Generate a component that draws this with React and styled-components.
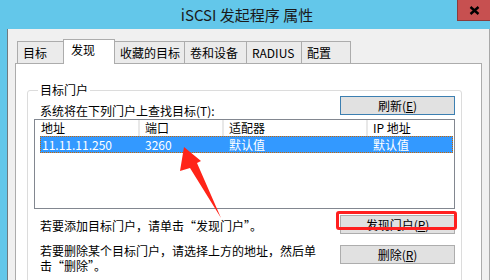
import React from "react";
import styled, { createGlobalStyle } from "styled-components";

const GlobalStyle = createGlobalStyle`
  html, body { margin: 0; padding: 0; }
  body {
    width: 490px;
    height: 280px;
    overflow: hidden;
    font-family: "Noto Sans CJK SC", "Noto Sans", sans-serif;
    font-size: 12px;
    color: #000;
  }
`;

const Window = styled.div`
  position: relative;
  width: 490px;
  height: 280px;
  background: #63c7ea;
  display: flex;
  flex-direction: column;
  overflow: hidden;
`;

const TitleBar = styled.div`
  flex: none;
  height: 29px;
  display: grid;
  grid-template-columns: 1fr auto 1fr;
`;

const Title = styled.div`
  grid-column: 2;
  align-self: center;
  padding-left: 4px;
  font-size: 15px;
  line-height: 20px;
  color: #1a1a1a;
  white-space: nowrap;
`;

const CloseButton = styled.div`
  grid-column: 3;
  justify-self: end;
  align-self: start;
  box-sizing: border-box;
  width: 33px;
  height: 21px;
  background: #c75050;
  border-left: 1px solid #8a3c3c;
  border-bottom: 1px solid #8a3c3c;
  display: flex;
  align-items: center;
  justify-content: center;
`;

const Body = styled.div`
  flex: 1;
  min-height: 0;
  margin-left: 7px;
  background: #f0f0f0;
  border-left: 1px solid #6f7a80;
  border-right: 1px solid #a8a8a8;
  display: flex;
  flex-direction: column;
`;

const TabStrip = styled.div`
  flex: none;
  margin-top: 10px;
  padding-left: 9px;
  display: flex;
  align-items: flex-end;
  position: relative;
  z-index: 1;
`;

const Tab = styled.div`
  box-sizing: border-box;
  width: ${(p) => p.$w}px;
  height: ${(p) => (p.$active ? 25 : 22)}px;
  margin-left: ${(p) => (p.$first ? 0 : -1)}px;
  margin-bottom: ${(p) => (p.$active ? -1 : 0)}px;
  padding: ${(p) => (p.$active ? "3px 0 0 7px" : "4px 0 0 5px")};
  border: 1px solid #acacac;
  border-bottom: none;
  background: ${(p) => (p.$active ? "#ffffff" : "#ebebeb")};
  font-size: 12px;
  line-height: 14px;
  white-space: nowrap;
  position: relative;
  z-index: ${(p) => (p.$active ? 2 : 1)};
`;

const Panel = styled.div`
  flex: 1;
  min-height: 0;
  margin: 0 7px;
  background: #ffffff;
  border: 1px solid #acacac;
  border-bottom: none;
  display: flex;
  flex-direction: column;
  overflow: hidden;
`;

const Group = styled.fieldset`
  flex: none;
  height: 230px;
  min-width: 0;
  margin: 20px 19px 0 11px;
  padding: 0 6px;
  border: 1px solid #dcdcdc;
  border-radius: 3px;
`;

const Legend = styled.legend`
  margin-left: 4px;
  padding: 0 2px;
  font-size: 12px;
  line-height: 12px;
`;

const TopRow = styled.div`
  display: flex;
  justify-content: space-between;
  align-items: flex-start;
`;

const ActionRow = styled.div`
  display: flex;
  justify-content: space-between;
  align-items: flex-start;
  margin-top: ${(p) => p.$mt}px;
`;

const Hint = styled.div`
  padding-left: 6px;
  margin-top: ${(p) => p.$mt}px;
  width: ${(p) => (p.$w ? `${p.$w}px` : "auto")};
  font-size: 12px;
  line-height: ${(p) => p.$lh}px;
  white-space: ${(p) => (p.$w ? "normal" : "nowrap")};
  font-feature-settings: ${(p) => (p.$fw ? '"fwid" 1' : "normal")};
`;

const Button = styled.button`
  box-sizing: border-box;
  width: 115px;
  height: 19px;
  padding: 0;
  background: #e1e1e1;
  border: 1px solid ${(p) => (p.$default ? "#3c7fb1" : "#adadad")};
  font-family: "Noto Sans CJK SC", "Noto Sans", sans-serif;
  font-size: 12px;
  line-height: 17px;
  color: #000;
`;

const ButtonWrap = styled.div`
  position: relative;
`;

const Highlight = styled.div`
  position: absolute;
  left: -4px;
  top: -4px;
  width: 121px;
  height: 19px;
  box-sizing: border-box;
  border: 3px solid #ff1f1f;
  border-radius: 3px;
  z-index: 2;
`;

const List = styled.div`
  margin-top: 1px;
  height: 90px;
  box-sizing: border-box;
  border: 1px solid #828790;
  background: #fff;
`;

const HeaderRow = styled.div`
  display: grid;
  grid-template-columns: 105px 84px 144px 1fr;
  height: 16px;
`;

const HeaderCell = styled.div`
  padding-left: ${(p) => p.$pad}px;
  font-size: 12px;
  line-height: 16px;
  border-right: ${(p) => (p.$last ? "none" : "2px solid #e8e8e8")};
  white-space: nowrap;
  overflow: hidden;
`;

const ItemRow = styled.div`
  box-sizing: border-box;
  height: 17px;
  margin: 0 1px 0 5px;
  display: grid;
  grid-template-columns: 99px 84px 144px 1fr;
  background: #3399ff;
  border: 1px dotted #cc6600;
  color: #fff;
`;

const ItemCell = styled.div`
  padding-left: ${(p) => p.$pad}px;
  font-size: 12px;
  line-height: 15px;
  white-space: nowrap;
`;

const Overlay = styled.svg`
  position: absolute;
  left: 0;
  top: 0;
  width: 490px;
  height: 280px;
  pointer-events: none;
  z-index: 5;
`;

const tabs = [
  { label: "目标", w: 47 },
  { label: "发现", w: 52, active: true },
  { label: "收藏的目标", w: 71 },
  { label: "卷和设备", w: 63 },
  { label: "RADIUS", w: 56 },
  { label: "配置", w: 50 },
];

export default function App() {
  return (
    <>
      <GlobalStyle />
      <Window>
        <TitleBar>
          <Title>iSCSI 发起程序 属性</Title>
          <CloseButton>
            <svg width="11" height="9" viewBox="0 0 11 9">
              <path d="M1.5 1 L9.5 8 M9.5 1 L1.5 8" stroke="#000" strokeWidth="2.4" fill="none" />
            </svg>
          </CloseButton>
        </TitleBar>
        <Body>
          <TabStrip>
            {tabs.map((t, i) => (
              <Tab key={t.label} $w={t.w} $active={t.active} $first={i === 0}>
                {t.label}
              </Tab>
            ))}
          </TabStrip>
          <Panel>
            <Group>
              <Legend>目标门户</Legend>
              <TopRow>
                <Hint $mt={8} $lh={14}>系统将在下列门户上查找目标(T):</Hint>
                <Button $default>
                  刷新(<u>E</u>)
                </Button>
              </TopRow>
              <List>
                <HeaderRow>
                  <HeaderCell $pad={6}>地址</HeaderCell>
                  <HeaderCell $pad={5}>端口</HeaderCell>
                  <HeaderCell $pad={5}>适配器</HeaderCell>
                  <HeaderCell $pad={5} $last>IP 地址</HeaderCell>
                </HeaderRow>
                <ItemRow>
                  <ItemCell $pad={1}>11.11.11.250</ItemCell>
                  <ItemCell $pad={5}>3260</ItemCell>
                  <ItemCell $pad={5}>默认值</ItemCell>
                  <ItemCell $pad={5}>默认值</ItemCell>
                </ItemRow>
              </List>
              <ActionRow $mt={6}>
                <Hint $mt={3} $lh={15} $fw>若要添加目标门户，请单击“发现门户”。</Hint>
                <ButtonWrap>
                  <Button>
                    发现门户(<u>P</u>)
                  </Button>
                  <Highlight />
                </ButtonWrap>
              </ActionRow>
              <ActionRow $mt={11}>
                <Hint $mt={-2} $lh={15} $w={282} $fw>
                  若要删除某个目标门户，请选择上方的地址，然后单击“删除”。
                </Hint>
                <Button>
                  删除(<u>R</u>)
                </Button>
              </ActionRow>
            </Group>
          </Panel>
        </Body>
        <Overlay viewBox="0 0 490 280">
          <polygon
            points="184,147 201,161 197,163 221,218 190,168 180,171"
            fill="#ff2418"
          />
        </Overlay>
      </Window>
    </>
  );
}
